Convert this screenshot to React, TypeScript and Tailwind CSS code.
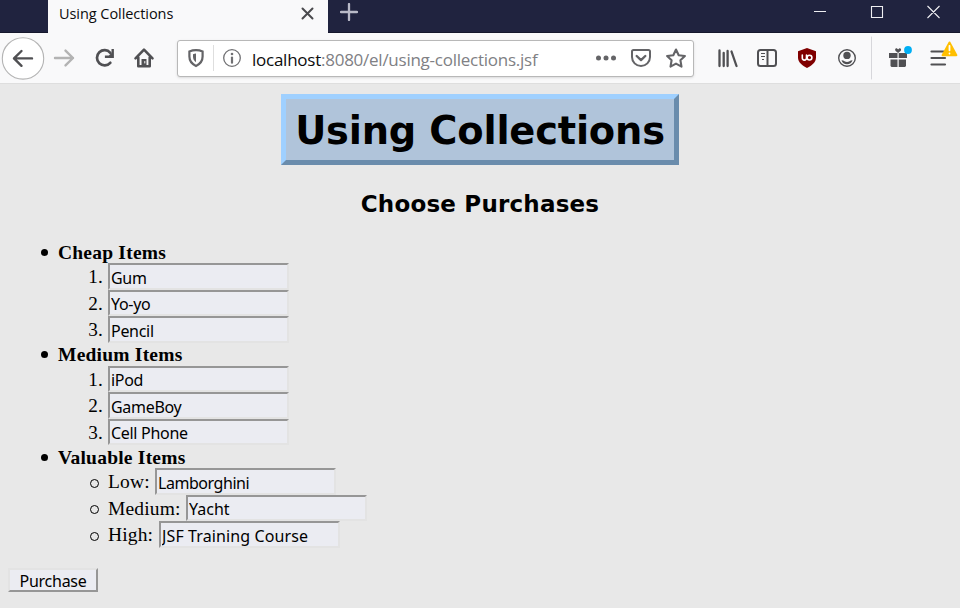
import React from "react";

const numbered = [
  { title: "Cheap Items", items: ["Gum", "Yo-yo", "Pencil"] },
  { title: "Medium Items", items: ["iPod", "GameBoy", "Cell Phone"] },
];

const valuable = [
  { label: "Low:", value: "Lamborghini", width: "w-[47px]", tracking: "tracking-[-0.45px]" },
  { label: "Medium:", value: "Yacht", width: "w-[78px]", tracking: "tracking-[0px]" },
  { label: "High:", value: "JSF Training Course", width: "w-[51px]", tracking: "tracking-[0.12px]" },
];

function Field({ value, tracking = "tracking-[-0.3px]" }: { value: string; tracking?: string }) {
  return (
    <input
      type="text"
      defaultValue={value}
      className={`block h-[26.500px] w-[181px] shrink-0 border-2 border-t-[#969696] border-r-[#e3e3e3] border-b-[#e3e3e3] border-l-[#969696] bg-[#ebecf2] px-px pt-[2.500px] pb-0 font-['Noto_Sans',sans-serif] text-[16px] leading-[20px] text-black outline-none ${tracking}`}
    />
  );
}

function SectionTitle({ children }: { children: React.ReactNode }) {
  return (
    <div className="flex h-[22px] items-center">
      <span className="ml-[41px] size-[7px] rounded-full bg-black" />
      <b className="ml-[10px] pt-px text-[19.500px] leading-[22px] tracking-[0.22px]">{children}</b>
    </div>
  );
}

function TitleBar() {
  return (
    <div className="flex h-[33px] bg-[#20233f] font-['Open_Sans',sans-serif]">
      <div className="w-12 border-b border-[#15172c]" />
      <div className="flex w-[280px] items-start bg-[#f9f9fa]">
        <span className="ml-[11px] w-[241px] pt-[3px] text-[14.5px] leading-[22px] tracking-[-0.06px] text-[#0c0c0d]">Using Collections</span>
        <svg className="mt-[7px] size-[14px]" viewBox="0 0 14 14" fill="none" stroke="#4a4a4d" strokeWidth="2" strokeLinecap="round"><path d="M2.500 1.500l10 10M12.500 1.500l-10 10" /></svg>
      </div>
      <div className="flex flex-1 items-start border-b border-[#15172c]">
        <svg className="mt-[3px] ml-[12px] size-[18px]" viewBox="0 0 18 18" fill="none" stroke="#b9bac8" strokeWidth="2.3" strokeLinecap="round"><path d="M9 1v16M1 9h16" /></svg>
        <svg className="mt-[5px] ml-[456px] h-[14px] w-[128px]" viewBox="0 0 128 14" fill="none" stroke="#eeeef2" strokeWidth="1.1"><path d="M0 6.5h12M57.5 1.5h11v11h-11zM113.5 1l12 12M125.5 1l-12 12" /></svg>
      </div>
    </div>
  );
}

function Toolbar() {
  return (
    <div className="flex h-[51px] items-start border-b border-[#dedede] bg-[#f9f9fa]">
      <svg className="h-[50px] w-[177px] shrink-0" viewBox="0 33 177 50" fill="none" stroke="#505053" strokeWidth="2.4" strokeLinecap="round" strokeLinejoin="round">
        <circle cx="23" cy="58.4" r="20.7" fill="#fff" stroke="#b4b4b4" strokeWidth="1.1" />
        <path d="M32 58.4H14M21.5 51L14 58.4l7.5 7.4" />
        <path d="M55 58h18M65.500 50.600L73 58l-7.500 7.400" stroke="#b3b3b3" />
        <path d="M110.300 52.800A7.600 7.600 0 1 0 110.300 62.800" strokeWidth="2.700" />
        <path d="M113.900 49v9h-9v-2.400h4l2.600-2.600v-4z" fill="#505053" stroke="none" />
        <path d="M135.500 58.400L144 49.700l8.500 8.700M138.300 57.500v8.700h11.400v-8.700" strokeWidth="2.600" />
        <path d="M141.500 66v-7h5v7z" fill="#505053" stroke="none" />
        <path d="M144.800 61.500v1.500" stroke="#f9f9fa" strokeWidth="1" />
      </svg>
      <div className="mt-[7px] flex h-[37px] w-[517px] shrink-0 items-center rounded-[3px] border border-[#b8b8b8] bg-white shadow-sm">
        <svg className="h-[35px] w-[74px] shrink-0" viewBox="178 41 74 35" fill="none">
          <path d="M196 50.200c2.400 0 4.700.5 6.600 1.300v5.100c0 4.700-2.400 7.500-6.600 9.400-4.200-1.900-6.600-4.700-6.600-9.400v-5.100c1.900-.8 4.200-1.300 6.600-1.300z" stroke="#646467" strokeWidth="2.200" />
          <path d="M196 53.500v8.800c-2.100-1.400-3-3.200-3-5.700v-2.400c1-.4 2-.6 3-.7z" fill="#646467" />
          <path d="M213.500 45v26" stroke="#dedede" />
          <circle cx="232" cy="58" r="8.300" stroke="#707073" strokeWidth="1.300" />
          <circle cx="232" cy="54" r="1.300" fill="#707073" />
          <path d="M232 57.500v5.200" stroke="#707073" strokeWidth="2.200" strokeLinecap="round" />
        </svg>
        <div className="w-[343px] shrink-0 pt-px font-['Open_Sans',sans-serif] text-[17px] leading-[35px] tracking-[-0.25px] whitespace-nowrap text-[#808084]"><span className="text-[#0c0c0d]">localhost</span>:8080/el/using-collections.jsf</div>
        <svg className="h-[35px] w-[98px] shrink-0" viewBox="595 41 98 35" fill="none" stroke="#646467" strokeWidth="2" strokeLinejoin="round" strokeLinecap="round">
          <g fill="#646467" stroke="none"><circle cx="598.500" cy="58" r="2.500" /><circle cx="606" cy="58" r="2.500" /><circle cx="613.500" cy="58" r="2.500" /></g>
          <path d="M633.500 50h15q1.500 0 1.500 1.500v5.500c0 5-4 9-9 9s-9-4-9-9v-5.500q0-1.500 1.500-1.500z" />
          <path d="M636.700 56l4.300 4.100 4.300-4.100" strokeWidth="2.400" />
          <path d="M676 49.500l2.700 5.700 6.200.8-4.500 4.300 1.100 6.300-5.500-3-5.500 3 1.100-6.300-4.500-4.300 6.200-.8z" strokeWidth="2.100" />
        </svg>
      </div>
      <svg className="h-[50px] w-[266px] shrink-0" viewBox="694 33 266 50" fill="none" stroke="#505053" strokeWidth="2" strokeLinecap="round">
        <path d="M719.500 50.500v15.500M723.700 53v13M727.600 51v15M731.500 51.500l5 14.500" strokeWidth="2.300" />
        <rect x="758" y="50" width="18" height="16" rx="2.500" />
        <path d="M767.500 50.500v15" strokeLinecap="butt" />
        <path d="M761 53.500h4M761 56.500h4M762 59.500h2" strokeWidth="1" strokeLinecap="butt" />
        <path d="M807 48l9 3.200v6.300c0 4.700-4 8-9 10.500-5-2.500-9-5.800-9-10.500v-6.300z" fill="#800000" stroke="none" />
        <path d="M802.300 55v3.100q0 2 2.100 2t2.100-2V55" stroke="#fff" strokeWidth="1.600" />
        <circle cx="809.500" cy="57.600" r="2.400" stroke="#fff" strokeWidth="1.600" />
        <circle cx="847" cy="58" r="8.300" strokeWidth="1.400" />
        <circle cx="847" cy="55.400" r="3.700" fill="#505053" stroke="none" />
        <path d="M841.500 60.300q2 .2 3 1 2.500 1.300 5 0 1-.8 3-1-1.300 4-5.500 4t-5.500-4z" fill="#505053" stroke="none" />
        <path d="M871.500 37v42" stroke="#d7d7db" strokeWidth="1" />
        <g fill="#505053" stroke="none">
          <path d="M889 53h8.500v5H889zM898.700 53h8.300v5h-8.300zM890.500 59.500h7V67h-6l-1-1zM898.700 59.500h7.300V66l-1 1h-6.300zM895.200 49c1-1.500 2.300-.3 2.900.5.800-1 2-2 2.900-.5.700 1.700-1.500 2.700-2.900 4-1.500-1.300-3.500-2.300-2.900-4z" />
        </g>
        <circle cx="908" cy="50" r="3.900" fill="#00aff4" stroke="none" />
        <path d="M931.500 51.500h12M931.500 58h13.500M931.500 64.500h13.500" strokeWidth="2.200" />
        <path d="M949.500 42.500l6.900 12.700h-13.800z" fill="#ffbf00" stroke="#ffbf00" strokeWidth="2" strokeLinejoin="round" />
        <path d="M949.500 45.800v4.500M949.500 53.500v.1" stroke="#fff" strokeWidth="1.800" />
      </svg>
    </div>
  );
}

export default function App() {
  return (
    <div className="flex h-[608px] w-[960px] flex-col overflow-hidden bg-[#e8e8e8] text-black">
      <TitleBar />
      <Toolbar />
      <main className="flex flex-col items-start font-['Liberation_Serif',serif]">
        <h1 className="mt-[10px] flex h-[71px] w-[398px] items-center justify-center self-center border-[5px] border-t-[#9fd0ff] border-r-[#6a8cac] border-b-[#6a8cac] border-l-[#9fd0ff] bg-[#b0c4da] pt-[2px] font-['DejaVu_Sans',sans-serif] text-[38.4px] font-bold tracking-[-0.2px] whitespace-nowrap">Using Collections</h1>
        <h2 className="mt-[24px] h-[30px] self-center font-['DejaVu_Sans',sans-serif] text-[23px] leading-[30px] font-bold tracking-[0.2px] whitespace-nowrap">Choose Purchases</h2>
        <div className="mt-[22px] text-[19.500px] tracking-[0.15px]">
          {numbered.map((section) => (
            <section key={section.title} className="mb-px">
              <SectionTitle>{section.title}</SectionTitle>
              {section.items.map((item, i) => (
                <div key={item} className="flex h-[26.500px] items-start">
                  <span className="w-[108px] pr-[5px] text-right text-[19.200px] leading-[28.500px]">{i + 1}.</span>
                  <Field value={item} />
                </div>
              ))}
            </section>
          ))}
          <SectionTitle>Valuable Items</SectionTitle>
          {valuable.map((row) => (
            <div key={row.label} className="flex h-[26.500px] items-start">
              <span className="mt-[10.500px] ml-[90px] size-[9px] rounded-full border-[1.5px] border-black" />
              <span className={`ml-[9px] leading-[28.500px] ${row.width}`}>{row.label}</span>
              <Field value={row.value} tracking={row.tracking} />
            </div>
          ))}
        </div>
        <button className="mt-[20px] ml-[8px] h-[24px] w-[90px] border-2 border-t-[#e3e3e3] border-r-[#969696] border-b-[#969696] border-l-[#e3e3e3] bg-[#ebecf2] pt-[2px] font-['Noto_Sans',sans-serif] text-[16px] leading-[18px] tracking-[-0.25px]">Purchase</button>
      </main>
    </div>
  );
}
